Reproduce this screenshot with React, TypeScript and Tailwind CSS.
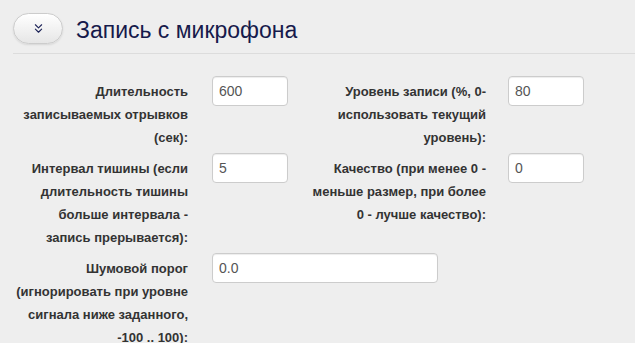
import { ChevronsDown } from "lucide-react";

type Field = { lines: string[]; value: string; wide?: boolean; gap?: "left" | "right" };

function FormField({ lines, value, wide, gap = "left" }: Field) {
  return (
    <div className="flex items-start">
      <label className="w-[176px] shrink-0 whitespace-nowrap pt-[4px] text-right text-[13px] font-bold leading-[23px] text-[#333]">
        {lines.map((l, i) => (
          <span key={i} className="block">
            {l}
          </span>
        ))}
      </label>
      <input
        readOnly
        value={value}
        className={`${wide ? "w-[226px]" : "w-[76px]"} ${gap === "left" ? "ml-[24px]" : "ml-[22px]"} h-[30px] rounded-[4px] border border-[#ccc] bg-white px-[6px] text-[14px] text-[#555] shadow-[inset_0_1px_1px_rgba(0,0,0,0.075)] outline-none`}
      />
    </div>
  );
}

export default function App() {
  return (
    <div className="h-[343px] w-[635px] overflow-hidden bg-[#eeeeee] font-['Liberation_Sans',Arial,sans-serif]">
      {/* Header */}
      <div className="flex h-[44px] items-center pl-[13px] pt-[13px]">
        <button className="flex h-[31px] w-[50px] items-center justify-center rounded-full border border-[#ccc] bg-gradient-to-b from-white to-[#e6e6e6] shadow-[0_1px_2px_rgba(0,0,0,0.1)]">
          <ChevronsDown size={15} strokeWidth={1.75} className="text-[#1c2257]" />
        </button>
        <h2 className="relative top-[2px] ml-[13px] text-[23px] leading-[31px] text-[#161a4b]">
          Запись с микрофона
        </h2>
      </div>
      <div className="ml-[13px] mt-[9px] border-t border-[#dcdcdc]" />

      {/* Form */}
      <div className="mt-[22px] flex flex-col gap-[4px] pl-[12px]">
        <div className="flex">
          <FormField lines={["Длительность", "записываемых отрывков", "(сек):"]} value="600" />
          <div className="ml-[22px]">
            <FormField
              lines={["Уровень записи (%, 0-", "использовать текущий", "уровень):"]}
              value="80"
              gap="right"
            />
          </div>
        </div>
        <div className="flex">
          <FormField
            lines={["Интервал тишины (если", "длительность тишины", "больше интервала -", "запись прерывается):"]}
            value="5"
          />
          <div className="ml-[22px]">
            <FormField
              lines={["Качество (при менее 0 -", "меньше размер, при более", "0 - лучше качество):"]}
              value="0"
              gap="right"
            />
          </div>
        </div>
        <FormField
          lines={["Шумовой порог", "(игнорировать при уровне", "сигнала ниже заданного,", "-100 .. 100):"]}
          value="0.0"
          wide
        />
      </div>
    </div>
  );
}
